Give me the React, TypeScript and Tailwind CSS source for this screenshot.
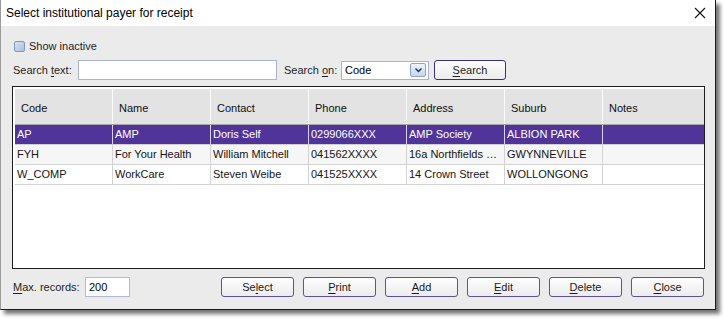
import React from "react";

const cols = [
  { key: "code", label: "Code" },
  { key: "name", label: "Name" },
  { key: "contact", label: "Contact" },
  { key: "phone", label: "Phone" },
  { key: "address", label: "Address" },
  { key: "suburb", label: "Suburb" },
  { key: "notes", label: "Notes" },
];

const rows = [
  { code: "AP", name: "AMP", contact: "Doris Self", phone: "0299066XXX", address: "AMP Society", suburb: "ALBION PARK", notes: "" },
  { code: "FYH", name: "For Your Health", contact: "William Mitchell", phone: "041562XXXX", address: "16a Northfields …", suburb: "GWYNNEVILLE", notes: "" },
  { code: "W_COMP", name: "WorkCare", contact: "Steven Weibe", phone: "041525XXXX", address: "14 Crown Street", suburb: "WOLLONGONG", notes: "" },
];

function Btn({ pre, u, post }: { pre?: string; u: string; post?: string }) {
  return (
    <button className="h-[20px] w-[73px] rounded-[3px] border border-[#5d5393] bg-gradient-to-b from-[#fdfdfd] to-[#ececec] text-[11px] text-[#1a1a1a] leading-none">
      {pre}
      <span className="underline underline-offset-2">{u}</span>
      {post}
    </button>
  );
}

export default function App() {
  return (
    <div className="w-[724px] h-[319px] bg-white font-['Liberation_Sans',Arial,sans-serif] text-[#1e1e1e]">
      <div className="w-[716px] h-[310px] flex flex-col border-l border-[#9a9a9a] border-r border-b border-r-[#1c1c1c] border-b-[#1c1c1c] shadow-[4px_4px_4px_rgba(0,0,0,0.55)] bg-[#ebebeb]">
        {/* title bar */}
        <div className="h-[26px] bg-white flex items-center justify-between pl-[5px] pr-[9px]">
          <span className="text-[12px] text-black">Select institutional payer for receipt</span>
          <svg width="12" height="12" viewBox="0 0 12 12">
            <path d="M1 1 L11 11 M11 1 L1 11" stroke="#111" strokeWidth="1.1" />
          </svg>
        </div>

        <div className="flex flex-col pl-[11px] pr-[11px] text-[11px]">
          {/* show inactive */}
          <div className="mt-[14px] h-[12px] flex items-center gap-[4px] pl-[2px]">
            <span className="w-[11px] h-[11px] border border-[#8497b8] rounded-[2px] bg-gradient-to-br from-[#d7e3f3] to-[#a9c0df]" />
            <span>Show inactive</span>
          </div>

          {/* search row */}
          <div className="mt-[8px] h-[20px] flex items-center">
            <span className="w-[66px] pl-[1px]">
              Search <span className="underline underline-offset-2">t</span>ext:
            </span>
            <div className="w-[199px] h-[20px] border border-[#a9b4cf] bg-white" />
            <span className="ml-[7px] w-[57px]">
              Search <span className="underline underline-offset-2">o</span>n:
            </span>
            <div className="w-[88px] h-[19px] border border-[#a9b4cf] bg-white flex items-center justify-between pl-[3px] pr-[2px]">
              <span className="text-black">Code</span>
              <span className="w-[16px] h-[14px] border border-[#8fa4c6] rounded-[2px] bg-gradient-to-b from-[#eef4fc] to-[#c5d6ee] flex items-center justify-center">
                <svg width="7" height="5" viewBox="0 0 7 5">
                  <path d="M0.5 0.5 L3.5 3.5 L6.5 0.5" fill="none" stroke="#1f2f5c" strokeWidth="1.4" />
                </svg>
              </span>
            </div>
            <div className="ml-[5px]">
              <button className="h-[20px] w-[72px] rounded-[3px] border border-[#3b2f85] bg-gradient-to-b from-[#fdfdfd] to-[#ececec] text-[11px] leading-none">
                <span className="underline underline-offset-2">S</span>earch
              </button>
            </div>
          </div>

          {/* grid */}
          <div className="mt-[6px] h-[183px] w-[693px] border border-[#1e1e1e] bg-white pt-[2px] pl-[2px]">
            <div className="flex h-[36px] bg-[#e3e3e3] border-b border-[#a7a7a7]">
              {cols.map((c, i) => (
                <div
                  key={c.key}
                  className={
                    "h-full flex items-center pl-[6px] pt-[3px] text-[#101010] " +
                    (i < cols.length - 1 ? "w-[98px] border-r border-[#fbfbfb]" : "flex-1")
                  }
                >
                  {c.label}
                </div>
              ))}
            </div>
            {rows.map((r, ri) => {
              const sel = ri === 0;
              return (
                <div
                  key={r.code}
                  className={
                    "flex h-[20px] border-b " +
                    (sel
                      ? "bg-[#50349a] text-white border-[#d0d0d0]"
                      : ri === 1
                      ? "bg-[#f6f6f6] text-[#141414] border-[#d3d3d3]"
                      : "bg-white text-[#141414] border-[#d3d3d3]")
                  }
                >
                  {cols.map((c, i) => (
                    <div
                      key={c.key}
                      className={
                        "h-full flex items-center pl-[2px] whitespace-nowrap overflow-hidden " +
                        (i < cols.length - 1
                          ? "w-[98px] border-r " + (sel ? "border-[#d8d0ea]" : "border-[#d3d3d3]")
                          : "flex-1")
                      }
                    >
                      {r[c.key as keyof typeof r]}
                    </div>
                  ))}
                </div>
              );
            })}
          </div>

          {/* bottom row */}
          <div className="mt-[8px] h-[20px] flex items-center">
            <span className="w-[73px] pl-[1px]">
              <span className="underline underline-offset-2">M</span>ax. records:
            </span>
            <div className="w-[45px] h-[20px] border border-[#b3bad6] bg-white flex items-center pl-[3px] text-black">200</div>
            <div className="ml-auto flex gap-[9px]">
              <Btn pre="Se" u="l" post="ect" />
              <Btn u="P" post="rint" />
              <Btn u="A" post="dd" />
              <Btn u="E" post="dit" />
              <Btn u="D" post="elete" />
              <Btn u="C" post="lose" />
            </div>
          </div>
        </div>
      </div>
    </div>
  );
}
